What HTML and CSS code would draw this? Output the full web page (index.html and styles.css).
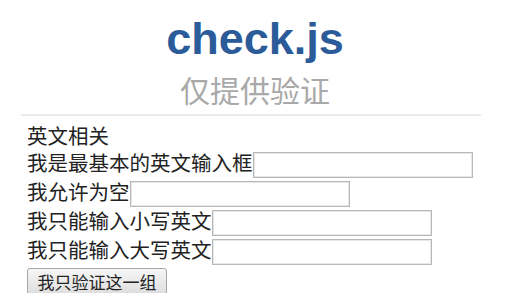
FILE: index.html
```html
<!DOCTYPE html>
<html lang="zh">
<head>
<meta charset="utf-8">
<title>check.js</title>
<link rel="stylesheet" href="styles.css">
</head>
<body>
<header class="head">
  <h1 class="title">check.js</h1>
  <p class="subtitle">仅提供验证</p>
</header>
<div class="rule"></div>
<form class="group">
  <div class="caption">英文相关</div>
  <div class="row"><label class="label">我是最基本的英文输入框</label><input class="field" type="text"></div>
  <div class="row"><label class="label">我允许为空</label><input class="field" type="text"></div>
  <div class="row"><label class="label">我只能输入小写英文</label><input class="field" type="text"></div>
  <div class="row"><label class="label">我只能输入大写英文</label><input class="field" type="text"></div>
  <button class="btn" type="button">我只验证这一组</button>
</form>
</body>
</html>
```
FILE: styles.css
```css
html, body {
  margin: 0;
  padding: 0;
  background: #ffffff;
  overflow: hidden;
}
body {
  font-family: "Noto Sans CJK SC", "Noto Sans", sans-serif;
  color: #222222;
}
.head {
  text-align: center;
  padding-top: 13px;
}
.title {
  margin: 0;
  font-family: "Liberation Sans", Arial, sans-serif;
  font-weight: bold;
  font-size: 45px;
  line-height: 52px;
  color: #2b5b99;
}
.subtitle {
  margin: 6px 0 0;
  font-size: 30px;
  line-height: 36px;
  color: #a9a9a9;
}
.rule {
  margin: 7px 29px 0 21px;
  height: 0;
  border-top: 2px solid #ebebeb;
}
.group {
  margin: 6px 0 0;
  padding-left: 27px;
  font-size: 20.5px;
}
.caption {
  line-height: 27px;
}
.row {
  display: flex;
  align-items: flex-start;
  height: 29px;
}
.label {
  line-height: 27px;
  white-space: nowrap;
}
.field {
  box-sizing: border-box;
  margin: 3px 0 0;
  width: 220px;
  height: 26px;
  border: 1px solid #b8b8b8;
  box-shadow: inset 0 0 0 1px #e6e6e6;
  background: #ffffff;
  padding: 0 4px;
  font-size: 16px;
}
.btn {
  display: block;
  box-sizing: border-box;
  margin-top: 3px;
  width: 140px;
  height: 27px;
  padding: 0;
  font-family: "Noto Sans CJK SC", sans-serif;
  font-size: 17px;
  line-height: 24px;
  color: #222222;
  border: 1px solid #a6a6a6;
  border-radius: 3px;
  background: linear-gradient(#f6f6f6, #dedede);
}
```
